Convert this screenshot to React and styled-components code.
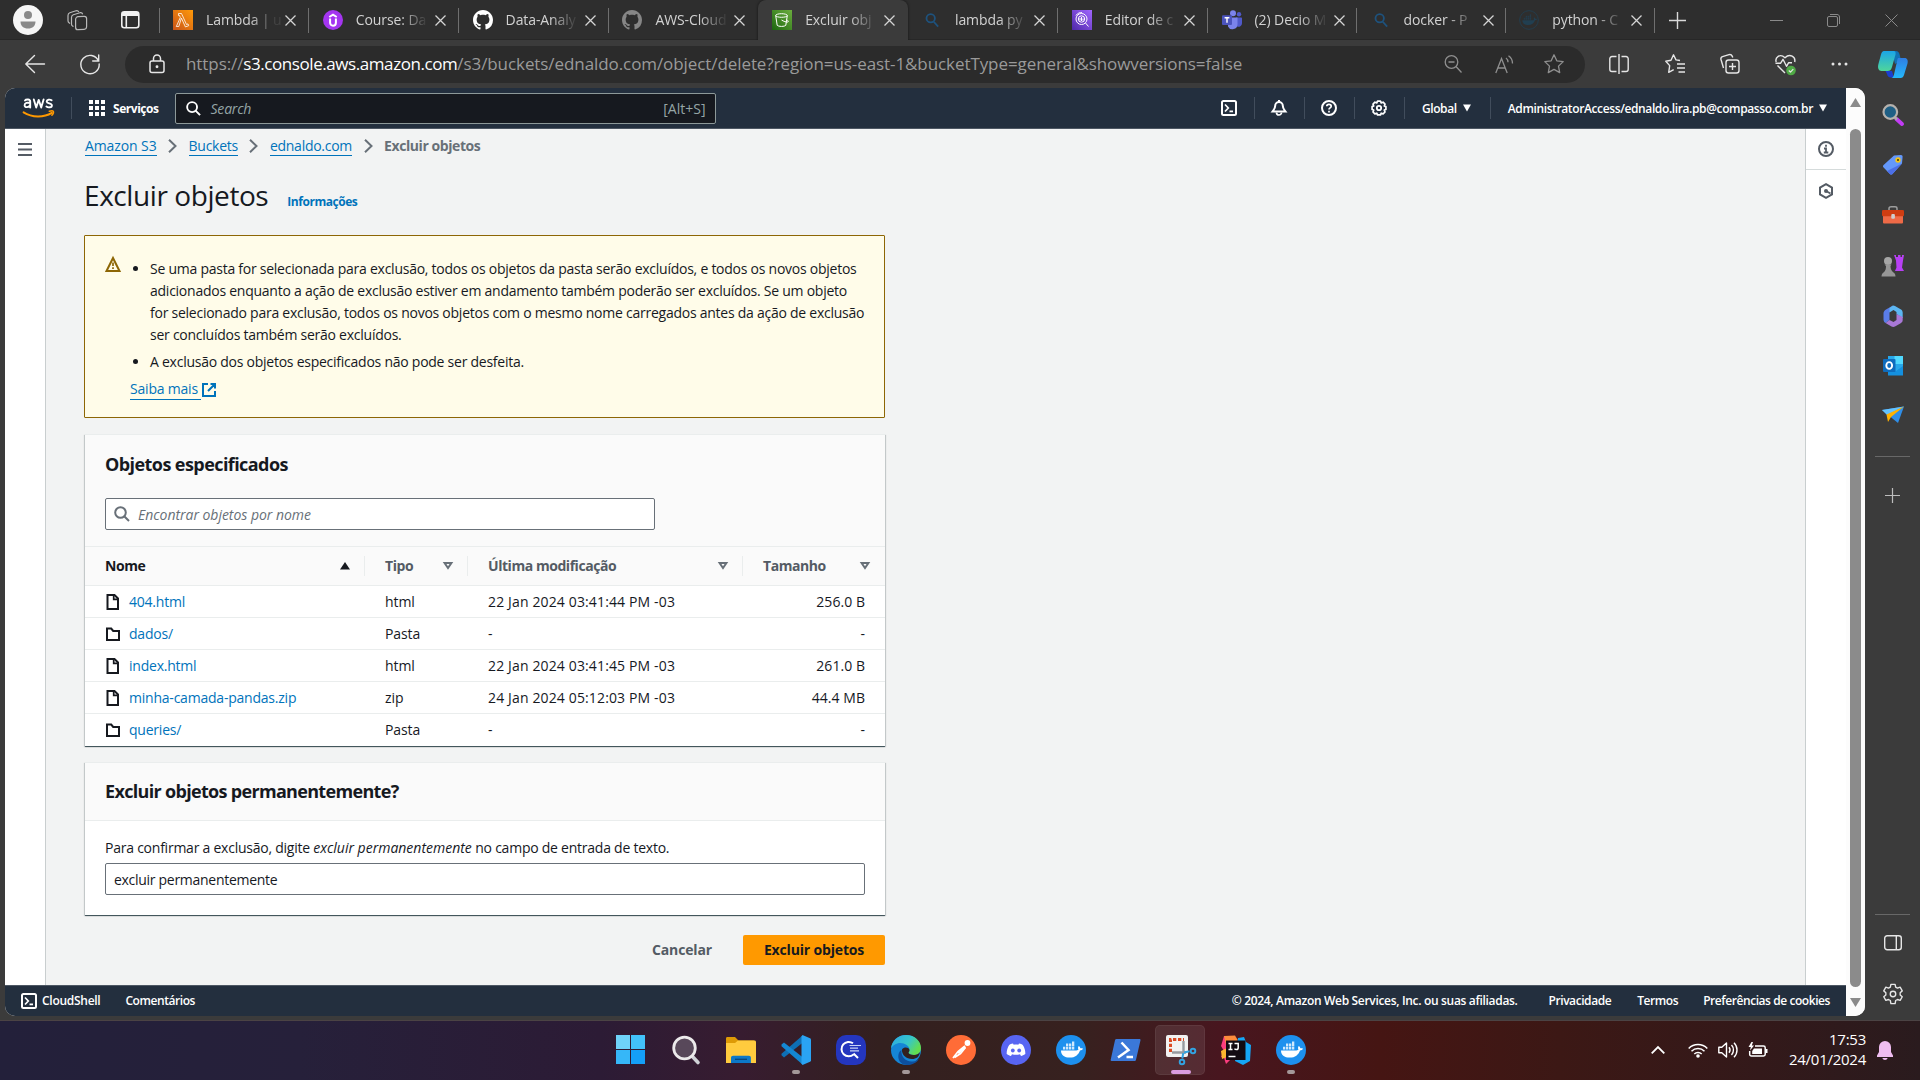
import React from 'react';
import styled, { createGlobalStyle, css } from 'styled-components';

const Global = createGlobalStyle`
  * { box-sizing: border-box; }
  html, body { margin: 0; padding: 0; background: #3b3b3b; overflow: hidden; }
  body { font-family: "Open Sans", "Noto Sans", sans-serif; font-size: 14px; color: #16191f; }
  h1, h2, p, ul { margin: 0; padding: 0; }
  svg { display: block; flex: none; overflow: visible; }
`;

/* ---------- shell ---------- */
const Screen = styled.div`
  width: 1920px; height: 1080px; display: flex; flex-direction: column; background: #3b3b3b; overflow: hidden;
`;
const Icon = styled.svg.attrs(p => ({ viewBox: p.viewBox || '0 0 16 16', fill: 'none' }))`
  width: ${p => p.$w || 16}px;
  height: ${p => p.$h || p.$w || 16}px;
  stroke: ${p => p.$stroke || 'none'};
  stroke-width: ${p => p.$sw || 2};
  stroke-linejoin: ${p => p.$join || 'miter'};
  stroke-linecap: ${p => p.$cap || 'butt'};
`;

/* ---------- browser tabs ---------- */
const TabStrip = styled.div`
  display: flex; align-items: center; height: 40px; background: #2e2e2e; box-shadow: inset 0 -1px 0 #272727;
`;
const Lead = styled.div`
  display: flex; align-items: center; width: 159px; height: 40px; padding-left: 13px; flex: none;
`;
const Avatar = styled.div`
  width: 30px; height: 30px; border-radius: 50%; background: #f6f6f6; display: flex; justify-content: center; align-items: center;
`;
const LeadIcon = styled.div`
  margin-left: ${p => p.$ml}px;
`;
const Tab = styled.div`
  flex: none; width: ${p => p.$w}px; height: 40px; display: flex; align-items: center; padding-left: 14px; position: relative;
  ${p => p.$active && css`
    background: #3b3b3b; border-radius: 8px 8px 0 0; box-shadow: 0 0 3px rgba(0,0,0,.6); clip-path: inset(0 -4px 0 -4px);
  `}
`;
const TabDivider = styled.span`
  position: absolute; left: -0.5px; top: 8px; width: 1px; height: 25px; background: #6f6f6f;
`;
const Favicon = styled.div`
  width: 20px; height: 20px; display: flex; align-items: center; justify-content: center; flex: none;
`;
const TabTitle = styled.div`
  width: 80px; margin: 0 -1px 0 13px; font-size: 14px; line-height: 20px; white-space: nowrap; color: #d2d2d2; letter-spacing: -0.1px;
  -webkit-mask-image: linear-gradient(90deg, #000 55%, rgba(0,0,0,.12) 86%);
  mask-image: linear-gradient(90deg, #000 55%, rgba(0,0,0,.12) 86%);
`;
const NewTab = styled.div`
  width: 46px; height: 40px; display: flex; align-items: center; justify-content: center; position: relative;
`;
const WindowControls = styled.div`
  display: flex; margin-left: auto;
`;
const WinBtn = styled.div`
  width: 57.5px; height: 40px; display: flex; align-items: center; justify-content: center;
`;

/* ---------- address bar ---------- */
const Toolbar = styled.div`
  display: flex; align-items: center; height: 48px; background: #3b3b3b;
`;
const NavIcon = styled.div`
  width: ${p => p.$w || 55}px; height: 37px; display: flex; align-items: center; justify-content: center; flex: none;
`;
const UrlPill = styled.div`
  display: flex; align-items: center; width: 1460px; height: 37px; border-radius: 19px; background: #2b2b2b; padding-left: 24px; margin-left: 15px; flex: none;
`;
const Url = styled.div`
  margin-left: 21px; font-size: 17px; line-height: 24px; color: #9a9a9a; white-space: nowrap; letter-spacing: -0.08px; flex: 1;
`;
const Host = styled.span`
  color: #fff; letter-spacing: -0.43px;
`;

/* ---------- browser body ---------- */
const BrowserBody = styled.div`
  display: flex; height: 933px; padding-left: 5px; background: #3b3b3b; border-bottom: 1px solid #4b4344;
`;
const PageFrame = styled.div`
  display: flex; width: 1860px; height: 928px; border-radius: 10px; overflow: hidden; background: #fff;
`;
const Page = styled.div`
  width: 1841px; display: flex; flex-direction: column;
`;
const Scrollbar = styled.div`
  width: 19px; background: #fcfcfc; display: flex; flex-direction: column; align-items: center; padding: 10px 0 9px;
`;
const Thumb = styled.div`
  width: 11px; height: 858px; border-radius: 6px; background: #8b8b8b; margin: 22px 0 11px;
`;
const EdgeSidebar = styled.div`
  width: 55px; display: flex; flex-direction: column; align-items: center; padding: 2px 0 4px;
`;
const SideSlot = styled.div`
  width: 54px; height: ${p => p.$h || 50.2}px; display: flex; align-items: center; justify-content: center; flex: none;
`;
const SideLine = styled.div`
  width: 35px; height: 1px; background: #686868; margin-top: ${p => p.$mt};
`;

/* ---------- AWS header ---------- */
const AwsHeader = styled.div`
  display: flex; align-items: center; height: 41px; background: #232f3e; border-bottom: 1px solid #4d5763; color: #fff; flex: none;
`;
const LogoCell = styled.div`
  width: 67px; height: 22px; padding-left: 18px; border-right: 1px solid #414d5c;
`;
const Services = styled.div`
  display: flex; align-items: center; gap: 8px; width: 103px; padding-left: 17px; font-size: 12px; font-weight: 700; letter-spacing: -0.46px;
`;
const GlobalSearch = styled.div`
  display: flex; align-items: center; width: 541px; height: 31px; border: 1px solid #8d9999; border-radius: 2px; background: #16191f;
  padding: 0 9px 0 10px; color: #95a5a6; font-size: 14px; margin-left: -0.5px;
`;
const SearchHint = styled.span`
  flex: 1; margin-left: 10px; font-style: italic; letter-spacing: -0.2px;
`;
const HeaderRight = styled.div`
  display: flex; align-items: center; margin-left: auto; height: 22px;
`;
const HeaderIcon = styled.div`
  width: 50px; height: 22px; display: flex; align-items: center; justify-content: center; border-right: 1px solid #414d5c;
`;
const HeaderMenu = styled.div`
  display: flex; align-items: center; gap: 6px; height: 22px; padding: 0 19px 0 17px; font-size: 12px; font-weight: 600; letter-spacing: -0.38px; white-space: nowrap;
  ${p => p.$divided && css`border-right: 1px solid #414d5c;`}
`;

/* ---------- AWS content ---------- */
const Work = styled.div`
  display: flex; flex: 1; min-height: 0;
`;
const LeftRail = styled.div`
  width: 41px; background: #fff; border-right: 1px solid #c9cecf; padding: 14px 0 0 13px;
`;
const RightRail = styled.div`
  width: 41px; background: #fff; border-left: 1px solid #c9cecf;
`;
const RailSlot = styled.div`
  height: 41px; display: flex; align-items: center; justify-content: center;
  ${p => p.$line && css`border-bottom: 1px solid #d5dbdb;`}
`;
const Content = styled.div`
  flex: 1; background: #f2f3f3; padding-left: 38px;
`;
const Column = styled.div`
  width: 802px; display: flex; flex-direction: column; padding-top: 6px;
`;
const Breadcrumbs = styled.div`
  display: flex; align-items: center; height: 22px; color: #687078; padding-left: 1px;
`;
const Link = styled.a`
  color: #0073bb; line-height: 18px; height: 20px; white-space: nowrap;
  letter-spacing: ${p => p.$ls ?? -0.15}px;
  ${p => p.$line && css`border-bottom: 1px solid #0073bb;`}
`;
const Crumb = styled(Link)`
  height: 19px; letter-spacing: ${p => (p.$first ? -0.1 : -0.27)}px;
`;
const Here = styled.span`
  font-weight: 700; letter-spacing: -0.42px; line-height: 20px;
`;
const ChevronBox = styled.span`
  width: 32px; display: flex; justify-content: center;
`;
const TitleRow = styled.div`
  display: flex; align-items: baseline; gap: 19px; margin-top: 20px; height: 36px; padding-left: 0;
`;
const Title = styled.h1`
  font-size: 28px; line-height: 36px; font-weight: 400; letter-spacing: -0.42px;
`;
const Info = styled.a`
  font-size: 12px; font-weight: 700; color: #0073bb; letter-spacing: -0.46px;
`;
const Alert = styled.div`
  display: flex; width: 801px; height: 183px; margin-top: 22px; margin-left: 0; border: 1px solid #8d6605; border-radius: 1px; background: #fffce9; padding: 20px 20px 0;
`;
const AlertBody = styled.div`
  margin-left: 9px; padding-top: 2px;
`;
const AlertList = styled.ul`
  list-style: disc; padding-left: 20px;
`;
const AlertItem = styled.li`
  line-height: 22px; letter-spacing: -0.25px; white-space: nowrap; margin-bottom: 5px;
`;
const LearnMore = styled.div`
  display: flex; align-items: center; height: 23px;
`;
const LearnLink = styled(Link)`
  line-height: 19px; height: 21px;
`;
const Card = styled.section`
  width: 800px; margin: 16px 0 0 1px; background: #fff; border-top: 1px solid #eaeded;
  box-shadow: 0 1px 1px 0 rgba(0,28,36,.3), 1px 1px 1px 0 rgba(0,28,36,.15), -1px 1px 1px 0 rgba(0,28,36,.15), 0 1px 0 #879196;
`;
const CardHead = styled.div`
  background: #fafafa; border-bottom: 1px solid #eaeded; height: ${p => p.$h}px; padding: ${p => p.$pt}px 20px 0;
`;
const CardTitle = styled.h2`
  font-size: 18px; line-height: 24px; font-weight: 700; letter-spacing: ${p => p.$ls}px; white-space: nowrap;
`;
const Field = styled.div`
  display: flex; align-items: center; width: ${p => p.$w}px; height: 32px; margin-top: ${p => p.$mt}px; padding: 0 8px; background: #fff;
  border: 1px solid #687078; border-radius: 2px; letter-spacing: -0.29px;
`;
const Placeholder = styled.span`
  margin-left: 8px; color: #687078; font-style: italic; letter-spacing: -0.03px;
`;
const cols = '279px 103px 275px 143px';
const HeadRow = styled.div`
  display: grid; grid-template-columns: ${cols}; height: 39px; align-items: center; background: #fafafa; border-bottom: 1px solid #eaeded;
`;
const HeadCell = styled.div`
  display: flex; align-items: center; justify-content: space-between; height: 20px; padding: 0 14px 0 20px; font-weight: 700; color: ${p => (p.$on ? '#16191f' : '#545b64')};
  line-height: 18px; letter-spacing: ${p => p.$ls ?? -0.45}px;
  & + & { border-left: 1px solid #eaeded; }
  &:last-child { padding-right: 15px; }
`;
const Row = styled.div`
  display: grid; grid-template-columns: ${cols}; height: 32px; align-items: center; border-bottom: 1px solid #eaeded;
  &:last-child { border-bottom: 0; }
`;
const Cell = styled.div`
  display: flex; align-items: center; padding: 0 20px; line-height: 20px; white-space: nowrap;
  letter-spacing: ${p => p.$ls ?? -0.1}px;
  & + & { padding-left: 21px; }
  ${p => p.$end && css`justify-content: flex-end;`}
`;
const NameLink = styled(Link)`
  margin-left: 8px; line-height: 20px; letter-spacing: -0.22px;
`;
const CardBody = styled.div`
  padding: 16px 20px 20px;
`;
const Label = styled.p`
  line-height: 22px; letter-spacing: -0.24px;
  em { letter-spacing: 0; }
`;
const Actions = styled.div`
  display: flex; align-items: center; justify-content: flex-end; margin-top: 20px; height: 30px; width: 801px;
`;
const Button = styled.button`
  height: 30px; padding: 0; width: ${p => p.$w}px; border: 0; border-radius: 2px; font: 700 14px/30px "Open Sans", sans-serif; letter-spacing: -0.16px;
  background: ${p => (p.$primary ? '#ff9900' : 'transparent')}; color: ${p => (p.$primary ? '#16191f' : '#545b64')};
`;

/* ---------- AWS footer ---------- */
const AwsFooter = styled.div`
  display: flex; align-items: center; height: 31px; background: #232f3e; border-top: 1px solid #4d5763; color: #fff; font-size: 12px; font-weight: 600; padding: 0 16px; flex: none; white-space: nowrap;
`;
const FootText = styled.span`
  margin-left: ${p => p.$ml}; letter-spacing: ${p => p.$ls ?? -0.43}px; line-height: 16px; margin-bottom: 1px;
`;

/* ---------- taskbar ---------- */
const Taskbar = styled.div`
  display: flex; align-items: center; height: 59px; padding-left: 603px;
  background: linear-gradient(90deg, #23203a 0, #26203a 300px, #2c1b35 600px, #371c30 740px, #33201f 880px, #37211f 1080px, #48161f 1220px, #451513 1380px, #3c1815 1560px, #33191a 1760px, #2a1b1e 1920px);
`;
const TaskItem = styled.div`
  width: 55px; height: 50px; display: flex; flex-direction: column; align-items: center; padding-top: 10px; margin-bottom: 1px; position: relative;
`;
const Active = styled.div`
  position: absolute; left: 2px; top: 0; width: 50px; height: 50px; border-radius: 5px; background: rgba(255,255,255,.09); border: 1px solid rgba(255,255,255,.06);
`;
const Indicator = styled.span`
  position: absolute; bottom: 1px; width: ${p => (p.$wide ? 20 : 8)}px; height: 4px; border-radius: 2px; background: ${p => (p.$wide ? '#da9ce0' : '#a49899')};
`;
const Tray = styled.div`
  display: flex; align-items: center; margin-left: auto; height: 58px; margin-bottom: 1px;
`;
const TrayIcon = styled.div`
  width: ${p => p.$w || 30}px; display: flex; justify-content: center;
`;
const Clock = styled.div`
  width: 93px; text-align: right; color: #fff; font-size: 15px; line-height: 20px; letter-spacing: -0.26px; padding-bottom: 3px;
`;

/* ---------- drawings ---------- */
const Close = () => (
  <Icon $w={11} viewBox="0 0 11 11" $stroke="#d5d5d5" $sw={1.3}><path d="M.5.5l10 10M10.5.5l-10 10" /></Icon>
);
const Caret = () => <Icon $w={8} $h={8} viewBox="0 0 8 8"><path d="M0 .5h8L4 7.5z" fill="#fff" /></Icon>;
const Loupe = ({ c = '#fff', s = 16, sw = 2 }) => (
  <Icon $w={s} $stroke={c} $sw={sw}><circle cx="6.5" cy="6.5" r="5.3" /><path d="M10.2 10.2l4.800 4.800" /></Icon>
);
const SortDown = () => <Icon $w={10} $h={8} viewBox="0 0 10 8" $stroke="#687078" $sw={2}><path d="M1.6 1h6.8L5 6z" /></Icon>;
const SortUp = () => <Icon $w={10} $h={8} viewBox="0 0 10 8"><path d="M5 0l5 7.5H0z" fill="#16191f" /></Icon>;
const FileIcon = () => (
  <Icon $stroke="#16191f"><path d="M2.5 1h7L13 4.5V15H2.5z" /><path d="M8.7 1v4.3H13" strokeWidth="1.7" /></Icon>
);
const FolderIcon = () => <Icon $stroke="#16191f"><path d="M2 14V2.6h4.2l2 2.4H14v9z" /></Icon>;
const Shell = () => (
  <Icon $stroke="#fff"><rect x="1" y="1" width="14" height="14" rx="1.5" /><path d="M4 4.5L7.3 8 4 11.500M8.500 11.300h3.500" strokeWidth="1.7" /></Icon>
);
const GitHubMark = ({ c }) => (
  <Icon $w={20}><path fill={c} d="M8 0C3.580 0 0 3.580 0 8c0 3.540 2.290 6.530 5.470 7.590.4.070.550-.170.550-.380 0-.190-.010-.820-.010-1.490-2.010.370-2.530-.490-2.690-.940-.090-.230-.480-.940-.820-1.130-.280-.150-.680-.520-.010-.530.630-.010 1.080.580 1.230.820.720 1.210 1.870.870 2.330.660.070-.520.280-.870.510-1.070-1.780-.200-3.640-.890-3.640-3.950 0-.870.310-1.590.820-2.150-.080-.200-.360-1.020.080-2.120 0 0 .670-.210 2.200.820.640-.180 1.320-.270 2-.270s1.360.090 2 .270c1.530-1.040 2.200-.820 2.200-.820.440 1.100.160 1.920.080 2.120.510.560.820 1.270.820 2.150 0 3.070-1.870 3.750-3.650 3.950.290.250.540.730.540 1.480 0 1.070-.010 1.930-.010 2.200 0 .210.150.460.550.380A8.010 8.010 0 0016 8c0-4.420-3.580-8-8-8z" /></Icon>
);
const Whale = ({ c = '#fff' }) => (
  <g fill={c}>
    <path d="M5 15.500h15.500c.9 0 1.700-.4 2-.9-.8-1.200-.5-2.800.3-3.700.9.600 1.500 1.500 1.500 2.400 1-.2 2-.1 2.700.4-.6 1.100-1.700 1.700-3 1.700-1.500 4.200-4.800 7.200-10.200 7.200-5.500 0-8.800-2.500-8.800-7.100z" />
    <path d="M7 11.800h2.300v2.700H7zM10 11.800h2.300v2.700H10zM13 11.800h2.300v2.700H13zM16 11.800h2.300v2.700H16zM10 8.600h2.300v2.700H10zM13 8.600h2.300v2.700H13zM16 6.500h2.300v4.800H16z" opacity=".8" />
  </g>
);
const Docker = () => (
  <Icon $w={30} viewBox="0 0 30 30"><circle cx="15" cy="15" r="15" fill="#1d90ee" /><Whale /></Icon>
);
const LambdaIcon = () => (
  <Icon $w={20} viewBox="0 0 20 20">
    <defs><linearGradient id="lam" x1="0" y1="1" x2="1" y2="0"><stop offset="0" stopColor="#c85318" /><stop offset="1" stopColor="#ff9a09" /></linearGradient></defs>
    <rect width="20" height="20" fill="url(#lam)" />
    <path d="M5.500 3.500h3l5 11 1.500-.6.7 1.800-3.300 1.200-4-8.800L5.800 16.500H3.300L7.300 7.600 6.600 5.500H5.500z" stroke="#fff" strokeWidth=".8" />
  </Icon>
);
const UdemyIcon = () => (
  <Icon $w={20} viewBox="0 0 20 20"><circle cx="10" cy="10" r="10" fill="#a435f0" /><path d="M6.300 7L10 4.700 13.700 7M7.100 8.500v4.300a2.900 2.900 0 005.800 0V8.500" stroke="#fff" strokeWidth="2" /></Icon>
);
const BucketIcon = () => (
  <Icon $w={20} viewBox="0 0 20 20">
    <defs><linearGradient id="s3" x1="0" y1="1" x2="1" y2="0"><stop offset="0" stopColor="#1b660f" /><stop offset="1" stopColor="#6cae3e" /></linearGradient></defs>
    <rect width="20" height="20" fill="url(#s3)" />
    <g stroke="#fff" strokeWidth="1"><ellipse cx="9.500" cy="5.500" rx="5.800" ry="1.800" /><path d="M3.700 5.500l1.500 9.800c1 1.500 7.600 1.500 8.600 0l1.500-9.800M9.500 10c2 1.300 5 2.400 6.500 2 1-.4-.2-1.600-1.400-2.400" /></g>
  </Icon>
);
const AthenaIcon = () => (
  <Icon $w={20} viewBox="0 0 20 20">
    <defs><linearGradient id="ath" x1="0" y1="1" x2="1" y2="0"><stop offset="0" stopColor="#4d27a8" /><stop offset="1" stopColor="#a166ff" /></linearGradient></defs>
    <rect width="20" height="20" fill="url(#ath)" />
    <g stroke="#fff" strokeWidth="1"><circle cx="9.500" cy="9" r="5.500" /><circle cx="9.500" cy="9" r="3.200" /><path d="M13.500 13l3 3.500M8 8v2.500M9.500 7v4M11 8.500v2M4 5.500C5.500 3 8 2.500 10 2.600" /></g>
  </Icon>
);
const TeamsIcon = () => (
  <Icon $w={20} viewBox="0 0 20 20">
    <circle cx="11" cy="3.300" r="3" fill="#7b83eb" /><circle cx="17" cy="4.300" r="2.200" fill="#5059c9" />
    <path d="M14 7.500h5.300c.4 0 .7.300.7.700v5a3.500 3.500 0 01-5 3.200z" fill="#5059c9" /><path d="M6 7.500h9.500v6.700a5 5 0 01-9.500 2.200z" fill="#7b83eb" />
    <rect y="5.200" width="10" height="9.800" rx="1" fill="#4b53bc" /><path d="M2.600 7.700h4.800M5 7.700v5" stroke="#fff" strokeWidth="1.400" />
  </Icon>
);
const DimLoupe = () => (
  <Icon $w={14} $stroke="#1e527d" $sw={2.1}><circle cx="6.500" cy="6" r="4.800" /><path d="M10 10l5 5.500" /></Icon>
);
const DimDocker = () => (
  <Icon $w={20} viewBox="0 0 30 30"><circle cx="15" cy="15" r="14" stroke="#213f51" strokeWidth="1.300" /><Whale c="#213f51" /></Icon>
);
const Gear = ({ s, c, sw }) => (
  <Icon $w={s} viewBox="0 0 24 24" $stroke={c} $sw={sw} $join="round">
    <path d="M9.700 1.500h4.600l.6 3 2 1.100 2.900-1 2.300 4-2.300 2v2.400l2.300 2-2.300 4-2.900-1-2 1.100-.6 3.400H9.700l-.6-3.400-2-1.100-2.900 1-2.300-4 2.300-2v-2.400l-2.300-2 2.300-4 2.900 1 2-1.100z" /><circle cx="12" cy="12" r="3" />
  </Icon>
);
const AwsLogo = () => (
  <Icon $w={31} $h={21} viewBox="0 0 31 21" $cap="round">
    <g stroke="#fff" strokeWidth="1.900" strokeLinejoin="round">
      <path d="M2 3.500C3 2 7.200 1.900 7.200 4.500V10.500M7.200 6C4.500 5.400 1.600 5.700 1.600 8.200c0 2.900 4.300 2.400 5.600-.2" />
      <path d="M10.800 2.500l2.400 8 2.500-7.600 2.500 7.600 2.400-8" />
      <path d="M28.600 3.200c-1.700-1-4.900-.7-4.900 1.200 0 2.400 5.200 1.500 5.200 4 0 2.200-3.700 2.500-5.500 1.200" />
    </g>
    <path d="M.6 15.400c8.500 5.300 20 5.400 28.200.5" stroke="#ff9900" strokeWidth="2" /><path d="M26.300 14.300c1.500-.5 3.600-.6 4 0 .4.700-.3 2.700-1.400 3.900" stroke="#ff9900" strokeWidth="1.500" />
  </Icon>
);

/* ---------- data ---------- */
const tabs = [
  { t: 'Lambda | u', i: <LambdaIcon /> },
  { t: 'Course: Da', i: <UdemyIcon /> },
  { t: 'Data-Analy', i: <GitHubMark c="#fff" /> },
  { t: 'AWS-Cloud', i: <GitHubMark c="#868686" /> },
  { t: 'Excluir obj', i: <BucketIcon />, active: true },
  { t: 'lambda py', i: <DimLoupe />, plain: true },
  { t: 'Editor de c', i: <AthenaIcon /> },
  { t: '(2) Decio M', i: <TeamsIcon />, w: 149 },
  { t: 'docker - P', i: <DimLoupe />, w: 148.7 },
  { t: 'python - C', i: <DimDocker />, w: 149 },
];
const rows = [
  ['404.html', 'html', '22 Jan 2024 03:41:44 PM -03', '256.0 B'],
  ['dados/', 'Pasta', '-', '-'],
  ['index.html', 'html', '22 Jan 2024 03:41:45 PM -03', '261.0 B'],
  ['minha-camada-pandas.zip', 'zip', '24 Jan 2024 05:12:03 PM -03', '44.4 MB'],
  ['queries/', 'Pasta', '-', '-'],
];

const sideIcons = [
  <Icon key="search" $w={22} viewBox="0 0 22 22"><path d="M14.500 15l5.500 5" stroke="#c23cf5" strokeWidth="4" strokeLinecap="round" /><path d="M12 12.500l3 3" stroke="#aaa" strokeWidth="2.500" /><circle cx="8.300" cy="8" r="6.800" fill="#1f5f85" stroke="#b5b1ad" strokeWidth="2.200" /></Icon>,
  <Icon key="tag" $w={22} viewBox="0 0 22 22"><path d="M12 1.500L19 1c1 0 1.700.8 1.600 1.800L20 9.500 10.500 20c-.8.800-1.800.8-2.600 0L1.600 13.600c-.8-.8-.8-1.700 0-2.500z" fill="#6498fa" /><path d="M20 9.500L10.500 20c-.8.800-1.800.8-2.600 0L5 17z" fill="#4c6fe8" /><circle cx="16" cy="6" r="1.900" stroke="#f2c31b" strokeWidth="1.700" fill="#493d00" /></Icon>,
  <Icon key="tools" $w={22} viewBox="0 0 22 22"><path d="M7 6V4.500C7 3 8 2.800 9 2.800h4c1.200 0 2 .4 2 1.700V6" stroke="#9d9d9d" strokeWidth="1.500" /><rect x="1" y="11" width="20" height="8.500" rx="1" fill="#ee6a47" /><rect x="0" y="6" width="22" height="6.300" rx="1.300" fill="#cf3d12" /><rect x="9.300" y="10" width="3.600" height="4.800" rx="1" fill="#cfcfcf" /></Icon>,
  <Icon key="games" $w={23} viewBox="0 0 23 23"><path d="M13 1h2v2h2V1h2.500v2h1.500V1h2l-1 5.500-1 7 2 3.500h-9l1.500-3.500-.5-7z" fill="#b840f5" /><circle cx="7" cy="7" r="4" fill="#a6a6a6" /><path d="M3.500 10.500h7L9.500 12c0 3 1 5 3 6.500 1.500 1 2 2.500 2 4h-14c0-1.500.6-3 2-4 2-1.500 2.500-3.500 2.500-6.500z" fill="#969696" /></Icon>,
  <Icon key="m365" $w={22} viewBox="0 0 22 22"><path d="M11 .5L4 4.500C2.500 5.400 1.500 7 1.500 8.500v6c0 1.500 1 3 2 3.500l4-3V7.500z" fill="#5a7de8" /><path d="M11 .5c1 0 1.500.2 2 .5l6 3.500c1 .6 1.700 2 1.700 3v5.500L14.500 9V7l-3-2L7.500 7.500V3z" fill="#5cb6f2" /><path d="M20.700 12v3c0 1.500-.7 2.500-2 3.200L13 21.500c-1 .6-2.500.6-3.500 0L3.500 18l4-3 4 2 3-2V9z" fill="#a878d6" /></Icon>,
  <Icon key="outlook" $w={22} viewBox="0 0 22 22"><path d="M6 1h15v19H6z" fill="#28a8ea" /><path d="M12.500 1H21v8h-8.500z" fill="#50d9ff" /><path d="M6 11l8 5 7-5v9.500H6z" fill="#1490df" /><rect x="1" y="4" width="12.500" height="13" rx="1" fill="#0f6cbd" /><ellipse cx="7.200" cy="10.500" rx="2.900" ry="3.400" stroke="#fff" strokeWidth="1.900" /></Icon>,
  <Icon key="send" $w={22} viewBox="0 0 22 22"><path d="M0 5l22-3.500L16 18z" fill="#2f8ee8" /><path d="M0 5l22-3.500L5 10z" fill="#63c2ff" /><path d="M4.500 9.500L22 1.500 9 12l-3 5z" fill="#ffb200" /></Icon>,
];

const taskIcons = [
  { i: <Icon $w={29} viewBox="0 0 29 29"><path d="M0 0h14v14H0z" fill="#6fd3f9" /><path d="M15 0h14v14H15z" fill="#42c2fb" /><path d="M0 15h14v14H0z" fill="#36b7f8" /><path d="M15 15h14v14H15z" fill="#149ff8" /></Icon> },
  { i: <Icon $w={30} viewBox="0 0 30 30"><path d="M20.500 20.500l6.500 7" stroke="#cfd2d6" strokeWidth="3.600" strokeLinecap="round" /><circle cx="13.500" cy="13" r="10.800" fill="#58485a" stroke="#eceaeb" strokeWidth="2.800" /></Icon> },
  { i: <Icon $w={30} viewBox="0 0 30 30"><path d="M0 3.500c0-1 .5-1.500 1.500-1.500H9l3.500 3.500H28V15H0z" fill="#dd9a06" /><path d="M0 8h9l3-2.500h16.500c.9 0 1.500.6 1.500 1.500v21H0z" fill="#ffcb3e" /><path d="M5 28v-5c0-1.500.7-2.200 2.200-2.200h15.500c1.500 0 2.200.7 2.200 2.200v5z" fill="#0c78c8" /><path d="M9 24.300h12" stroke="#08457a" strokeWidth="1.300" /></Icon> },
  { i: <Icon $w={30} viewBox="0 0 30 30"><path d="M22 7.500L3 22.500l-2.500-2.200v-1.600L21.500.5z" fill="#0e6fb5" /><path d="M22 22.500L3 7.500.5 9.500v1.700L21.500 29.500z" fill="#1487d2" /><path d="M21.500 0L29 3.200c.7.300 1 .8 1 1.500v20.600c0 .7-.3 1.200-1 1.500L21.500 30l-1-1.500v-27z" fill="#2aa3f3" /></Icon>, on: true },
  { i: <Icon $w={30} viewBox="0 0 30 30"><rect width="30" height="30" rx="10" fill="#2436bf" /><path d="M17.500 19.500A7.200 7.200 0 1117 8.300M17.500 18.500l4.500 4.500" stroke="#fff" strokeWidth="2" /><path d="M13.500 10.500H25M14 13.200h8M14 15.800h9" stroke="#c9d3f6" strokeWidth="1.200" /></Icon> },
  { i: <Icon $w={30} viewBox="0 0 30 30">
      <defs><linearGradient id="e1" x1="0" y1="0" x2="1" y2=".5"><stop offset="0" stopColor="#2aa6e8" /><stop offset=".6" stopColor="#37c6c9" /><stop offset="1" stopColor="#62dd50" /></linearGradient></defs>
      <circle cx="15" cy="15" r="15" fill="#1585d6" />
      <path d="M0 13.500C.8 5.500 7 0 15 0c9 0 15 6.200 15 13 0 4.500-3.200 7-7 7-3.300 0-5.500-1.200-5.500-2.300 0-.7 1-1 1-3C18.500 11 14 8 9.500 8 5 8 1.500 10.500 0 13.500z" fill="url(#e1)" />
      <path d="M10.500 15c-1 6 4 12 11 11.500 3-.2 5.500-1.500 6.500-2.500C25.500 28 20.500 30 16 30 9 30 6.500 24 7.500 19.500c.4-2 1.500-3.600 3-4.500z" fill="#0d4f9e" />
      <path d="M11 14.500c2-2.700 6.500-2.500 7.500.5 0 1.500-1 2-1 2.700 0 1.100 2.200 2.300 5.500 2.300 2.500 0 4.800-1 6-3-1 5-3.500 7-8 7-5.500 0-10.500-4-10-9.500z" fill="#33201f" /></Icon>, on: true },
  { i: <Icon $w={30} viewBox="0 0 30 30"><circle cx="15" cy="15" r="15" fill="#ff6c37" /><path d="M7 23l5-6.500 7-5.500M8.500 22.500l6-4 5-6" stroke="#fff" strokeWidth="1.700" /><path d="M11 18l7.500-7 1.500 1.800-7 6z" fill="#fff" /><circle cx="21.500" cy="8" r="2.900" fill="#fff" /></Icon> },
  { i: <Icon $w={30} viewBox="0 0 30 30"><circle cx="15" cy="15" r="15" fill="#5865f2" /><path d="M12 8.500c-1.700.3-3 .8-3.800 1.400C6.200 13 5.500 16.500 5.700 19c1.600 1.200 3 1.800 4.300 2l1-1.700c2.700.7 5.300.7 8 0l1 1.700c1.300-.2 2.700-.8 4.300-2 .2-2.500-.5-6-2.500-9.100-.8-.6-2.100-1.100-3.800-1.400l-.7 1.200c-1.500-.2-3.100-.2-4.600 0z" fill="#fff" /><ellipse cx="11.800" cy="15.500" rx="1.900" ry="2.100" fill="#5865f2" /><ellipse cx="18.200" cy="15.500" rx="1.900" ry="2.100" fill="#5865f2" /></Icon> },
  { i: <Docker /> },
  { i: <Icon $w={30} viewBox="0 0 30 30"><path d="M5.500 4h23c.7 0 1.100.5 1 1.200L25 24.800c-.2.800-.7 1.200-1.500 1.200h-23c-.7 0-1-.5-.8-1.200L4 5.200C4.200 4.400 4.700 4 5.500 4z" fill="#3b78d8" /><path d="M10.500 7.500l7 7.500-10.500 7.500M15.500 22h6.500" stroke="#fff" strokeWidth="2.500" /></Icon> },
  { i: <Icon $w={30} viewBox="0 0 30 30"><rect width="22" height="22" rx="2" fill="#f1f1f1" /><path d="M4.500 17V4.500H18" stroke="#d8390e" strokeWidth="3" strokeDasharray="3.300 1.700" /><path d="M17.500 6v13M6 17.500h14" stroke="#8d9196" strokeWidth="2.400" /><path d="M17.300 18l-1 5.500M18 17.500l5.500-1.200" stroke="#1e9be0" strokeWidth="2" /><circle cx="16" cy="27" r="2.300" stroke="#1e9be0" strokeWidth="1.900" /><circle cx="27" cy="16" r="2.300" stroke="#1e9be0" strokeWidth="1.900" /></Icon>, sel: true },
  { i: <Icon $w={30} viewBox="0 0 30 30">
      <path d="M3 1l9 1 3 10-5 12-5 5-2-6-3-1 3-6-3-5z" fill="#fb3d7f" /><path d="M3 1l11-.5 3 5L5 10z" fill="#fd8c3c" /><path d="M0 16l6-3v9l-5 2z" fill="#fdb62f" /><path d="M17 3l6-1 2 5 5 3-1 16-7 4-8-4z" fill="#15a6f5" />
      <rect x="5" y="5.500" width="19.500" height="19.500" fill="#120b12" /><path d="M7.500 8.500h4M9.500 8.500v6M7.500 14.500h4M13.500 8.500h3.700v4.300c0 1.300-.7 1.800-1.700 1.800-.9 0-1.600-.3-2-.9" stroke="#fff" strokeWidth="1.500" /><path d="M7.500 21.500h7" stroke="#fff" strokeWidth="1.500" /></Icon> },
  { i: <Docker />, on: true },
];

export default function App() {
  return (
    <Screen>
      <Global />
      <TabStrip>
        <Lead>
          <Avatar>
            <Icon $w={16} $h={18} viewBox="0 0 16 18"><circle cx="8" cy="4" r="4" fill="#8a8a8a" /><path d="M.5 10.500h15c0 4.500-3 7-7.500 7s-7.500-2.500-7.500-7z" fill="#8a8a8a" /></Icon>
          </Avatar>
          <LeadIcon $ml={24}>
            <Icon $w={21} viewBox="0 0 21 21" $stroke="#b9b9b9" $sw={1.2} $join="round">
              <rect x="8.600" y="6.500" width="11" height="13" rx="2.500" transform="skewY(-4) translate(0 1)" />
              <path d="M6.500 16.500l-1-.6c-1-.6-1-1.300-1-2V7.500c0-1.500.5-2.200 1.800-2.700L13 2.700c1.500-.4 2.300.3 2.700 1.500M3 13.500l-1-.7c-1-.7-1-1-1-2V5.500C1 4 1.500 3.300 2.800 2.800L9 .8c1.500-.4 2.300.2 2.800 1.200" />
            </Icon>
          </LeadIcon>
          <LeadIcon $ml={33}>
            <Icon $w={19} $h={18} viewBox="0 0 19 18" $stroke="#f1f1f1" $sw={1.6}>
              <rect x=".8" y=".8" width="17" height="16" rx="2.500" /><path d="M1 3h17" strokeWidth="4" /><path d="M5.300 5v12" />
            </Icon>
          </LeadIcon>
        </Lead>
        {tabs.map(t => (
          <Tab key={t.t} $active={t.active} $w={t.w || 149.8}>
            {!t.active && !t.plain && <TabDivider />}
            <Favicon>{t.i}</Favicon>
            <TabTitle>{t.t}</TabTitle>
            <Close />
          </Tab>
        ))}
        <NewTab><TabDivider /><Icon $w={17} viewBox="0 0 17 17" $stroke="#dadada" $sw={1.4}><path d="M8.500 0v17M0 8.500h17" /></Icon></NewTab>
        <WindowControls>
          <WinBtn><Icon $w={13} viewBox="0 0 13 13" $stroke="#8a8a8a" $sw={1}><path d="M0 6.500h13" /></Icon></WinBtn>
          <WinBtn><Icon $w={13} viewBox="0 0 13 13" $stroke="#8a8a8a" $sw={1}><rect x=".5" y="2.500" width="10" height="10" rx="1.500" /><path d="M3 .5h7c1.500 0 2.500 1 2.500 2.500v7" /></Icon></WinBtn>
          <WinBtn><Icon $w={13} viewBox="0 0 13 13" $stroke="#8a8a8a" $sw={1}><path d="M.5.5l12 12M12.500.5l-12 12" /></Icon></WinBtn>
        </WindowControls>
      </TabStrip>

      <Toolbar>
        <NavIcon $w={70}><Icon $w={20} viewBox="0 0 20 20" $stroke="#e6e6e6" $sw={1.4} $join="round" $cap="round"><path d="M19.500 10H.8M9.500 1.500L.8 10l8.700 8.500" /></Icon></NavIcon>
        <NavIcon $w={40}><Icon $w={20} viewBox="0 0 20 20" $stroke="#e6e6e6" $sw={1.4} $cap="round"><path d="M18.500 7A9.200 9.200 0 1019.200 10M18.700 1v6h-6" /></Icon></NavIcon>
        <UrlPill>
          <Icon $w={16} $h={20} viewBox="0 0 16 20" $stroke="#e6e6e6" $sw={1.5}><rect x="1" y="7" width="14" height="11.500" rx="2" /><path d="M4.500 7V4.500a3.500 3.500 0 017 0V7" /><circle cx="8" cy="12.700" r=".7" fill="#e6e6e6" /></Icon>
          <Url>https://<Host>s3.console.aws.amazon.com</Host>/s3/buckets/ednaldo.com/object/delete?region=us-east-1&amp;bucketType=general&amp;showversions=false</Url>
          <NavIcon $w={66}><Icon $w={18} viewBox="0 0 18 18" $stroke="#8f8f8f" $sw={1.3}><circle cx="7.500" cy="7" r="6.300" /><path d="M4.500 7h6M12 11.500l5.500 6" /></Icon></NavIcon>
          <NavIcon $w={37}><Icon $w={19} viewBox="0 0 19 19" $stroke="#8f8f8f" $sw={1.3}><path d="M.8 18L6.500 3.500 12.200 18M2.800 13h7.400M11 3c1.300 1 2 2.500 2 4.300M13.500.8C16 2.500 17.500 5 17.500 8.500" /></Icon></NavIcon>
          <NavIcon $w={62}><Icon $w={20} viewBox="0 0 20 20" $stroke="#8f8f8f" $sw={1.3} $join="round"><path d="M10 .8l2.800 6 6.400.8-4.700 4.500 1.200 6.500L10 15.400l-5.700 3.200 1.200-6.500L.8 7.600l6.400-.8z" /></Icon></NavIcon>
        </UrlPill>
        <NavIcon $w={67}><Icon $w={20} viewBox="0 0 20 20" $stroke="#e6e6e6" $sw={1.4} $join="round"><path d="M7.500 2.500H3A2.200 2.200 0 00.8 4.700v10.600A2.200 2.200 0 003 17.500h4.500M12.500 2.500H17a2.200 2.200 0 012.200 2.200v10.600a2.200 2.200 0 01-2.200 2.200h-4.500M10 0v20" /></Icon></NavIcon>
        <NavIcon $w={46}><Icon $w={20} viewBox="0 0 20 20" $stroke="#e6e6e6" $sw={1.4} $join="round"><path d="M15 6.500l-4-.6L8.500.8 6 6.300l-5.200.9 3.900 4.400-1 6.700 5-2.700M12 10h8M12 14h8M13.500 18H20" /></Icon></NavIcon>
        <NavIcon $w={63}><Icon $w={20} viewBox="0 0 20 20" $stroke="#e6e6e6" $sw={1.4} $join="round"><rect x="6" y="6" width="13" height="13" rx="2.500" /><path d="M12.500 9v7M9 12.500h7M3.500 14L1 5.500C.6 4 1.300 3 2.500 2.600l6.500-2c1.500-.4 2.500 0 3.200 1.500l.6 1.400" /></Icon></NavIcon>
        <NavIcon $w={48}><Icon $w={21} viewBox="0 0 21 21" $stroke="#e6e6e6" $sw={1.4} $join="round"><path d="M1.200 8C-.3 3.500 5-1 10 3.700 15-1 20.800 3 19.700 8M2.500 11.500L10 19M.5 9.300h5l2.500-4 3.500 7 2-3.500h3.500" /><circle cx="16" cy="16.500" r="4.800" fill="#4fa945" stroke="none" /><path d="M13.800 16.500l1.700 1.700 2.800-3" strokeWidth="1.200" /></Icon></NavIcon>
        <NavIcon $w={61}><Icon $w={17} $h={4} viewBox="0 0 17 4"><g fill="#e6e6e6"><circle cx="2" cy="2" r="1.500" /><circle cx="8.500" cy="2" r="1.500" /><circle cx="15" cy="2" r="1.500" /></g></Icon></NavIcon>
        <NavIcon $w={46}>
          <Icon $w={30} $h={28} viewBox="0 0 30 28">
            <defs>
              <linearGradient id="cp1" x1="0" y1="0" x2="0" y2="1"><stop offset="0" stopColor="#1ba5e8" /><stop offset="1" stopColor="#4fd69b" /></linearGradient>
              <linearGradient id="cp2" x1="0" y1="0" x2="0" y2="1"><stop offset="0" stopColor="#2f7de2" /><stop offset="1" stopColor="#25b8fb" /></linearGradient>
            </defs>
            <path d="M14 1h4c2 0 3 1.500 3.600 3.500L22.500 8H26l-9 6z" fill="#1172b5" /><path d="M6 1h9.500c2 0 2.400 1.500 2 3.500L14 17c-1 3-2 4-4.500 4H3.500C.5 21-.5 18 .3 14.500L3 4.500C3.600 2.200 4.500 1 6 1z" fill="url(#cp1)" />
            <path d="M7.500 21H14l2 6.500h-3c-2.500 0-3.500-1.500-4-3.500z" fill="#1a3fd0" /><path d="M20 8h6.500c3 0 3.700 2.500 3 5.500L26 25c-.7 2-1.500 3-3.500 3h-9c1.500-.5 2-1.500 2.500-3.500L19 11.500c.3-1.500.5-2.500 1-3.500z" fill="url(#cp2)" />
          </Icon>
        </NavIcon>
      </Toolbar>

      <BrowserBody>
        <PageFrame>
          <Page>
            <AwsHeader>
              <LogoCell><AwsLogo /></LogoCell>
              <Services>
                <Icon><path fill="#fff" d="M0 0h4v4H0zM6 0h4v4H6zM12 0h4v4h-4zM0 6h4v4H0zM6 6h4v4H6zM12 6h4v4h-4zM0 12h4v4H0zM6 12h4v4H6zM12 12h4v4h-4z" /></Icon>
                Serviços
              </Services>
              <GlobalSearch><Loupe s={15} /><SearchHint>Search</SearchHint>[Alt+S]</GlobalSearch>
              <HeaderRight>
                <HeaderIcon><Shell /></HeaderIcon>
                <HeaderIcon><Icon $stroke="#fff"><path d="M8 2a3.800 3.800 0 00-3.800 3.800C4.200 8.500 3 9.500 1.500 11.500h13C13 9.500 11.800 8.500 11.800 5.800A3.800 3.800 0 008 2zM8 0v2" /><path d="M5.500 12.500a2.500 2.500 0 005 0" strokeWidth="1.700" /></Icon></HeaderIcon>
                <HeaderIcon><Icon $stroke="#fff"><circle cx="8" cy="8" r="7" /><path d="M5.800 6.300C5.800 3.600 10.200 3.700 10.200 6.200 10.200 8 8 7.700 8 9.500M8 10.800v1.700" strokeWidth="1.700" /></Icon></HeaderIcon>
                <HeaderIcon><Icon $stroke="#fff" $join="round"><path d="M6.500 1.200h3l.7 1.700 1.900-.7 1.900 1.900-.7 1.900 1.600.6v2.900l-1.600.6.7 1.900-1.900 1.900-1.900-.7-.7 1.700h-3l-.7-1.700-1.900.7-1.900-1.900.7-1.900-1.600-.6V6.600L2.700 6 2 4.100l1.900-1.900 1.900.7z" strokeWidth="1.700" /><circle cx="8" cy="8" r="2.200" strokeWidth="1.800" /></Icon></HeaderIcon>
                <HeaderMenu $divided>Global <Caret /></HeaderMenu>
                <HeaderMenu>AdministratorAccess/ednaldo.lira.pb@compasso.com.br <Caret /></HeaderMenu>
              </HeaderRight>
            </AwsHeader>

            <Work>
              <LeftRail><Icon $w={14} $h={13} viewBox="0 0 14 13" $stroke="#545b64"><path d="M0 1h14M0 6.500h14M0 12h14" /></Icon></LeftRail>
              <Content>
                <Column>
                  <Breadcrumbs>
                    {['Amazon S3', 'Buckets', 'ednaldo.com'].map((b, n) => (
                      <React.Fragment key={b}>
                        <Crumb $line $first={n === 0}>{b}</Crumb>
                        <ChevronBox><Icon $w={9} $h={14} viewBox="0 0 9 14" $stroke="#687078"><path d="M1 .8L7.500 7 1 13.200" /></Icon></ChevronBox>
                      </React.Fragment>
                    ))}
                    <Here>Excluir objetos</Here>
                  </Breadcrumbs>
                  <TitleRow><Title>Excluir objetos</Title><Info>Informações</Info></TitleRow>
                  <Alert>
                    <Icon $stroke="#8d6605"><path d="M8 2l6.500 13h-13z" /><path d="M8 6.500V10M8 11.300V13" strokeWidth="1.700" /></Icon>
                    <AlertBody>
                      <AlertList>
                        <AlertItem>
                          Se uma pasta for selecionada para exclusão, todos os objetos da pasta serão excluídos, e todos os novos objetos<br />
                          adicionados enquanto a ação de exclusão estiver em andamento também poderão ser excluídos. Se um objeto<br />
                          for selecionado para exclusão, todos os novos objetos com o mesmo nome carregados antes da ação de exclusão<br />
                          ser concluídos também serão excluídos.
                        </AlertItem>
                        <AlertItem>A exclusão dos objetos especificados não pode ser desfeita.</AlertItem>
                      </AlertList>
                      <LearnMore>
                        <LearnLink $line $ls={-0.2}>Saiba mais&nbsp;</LearnLink>
                        <Icon $stroke="#0073bb"><path d="M7 2H2v12h12V9M9.500 2H14v4.500M14 2L7 9" /></Icon>
                      </LearnMore>
                    </AlertBody>
                  </Alert>

                  <Card>
                    <CardHead $h={112} $pt={17}>
                      <CardTitle $ls={-0.57}>Objetos especificados</CardTitle>
                      <Field $w={550} $mt={22}><Loupe c="#687078" /><Placeholder>Encontrar objetos por nome</Placeholder></Field>
                    </CardHead>
                    <HeadRow>
                      <HeadCell $on>Nome <SortUp /></HeadCell>
                      <HeadCell>Tipo <SortDown /></HeadCell>
                      <HeadCell>Última modificação <SortDown /></HeadCell>
                      <HeadCell>Tamanho <SortDown /></HeadCell>
                    </HeadRow>
                    <div>
                      {rows.map(([name, type, date, size]) => (
                        <Row key={name}>
                          <Cell>{name.endsWith('/') ? <FolderIcon /> : <FileIcon />}<NameLink>{name}</NameLink></Cell>
                          <Cell>{type}</Cell>
                          <Cell $ls={0.14}>{date}</Cell>
                          <Cell $end $ls={0.05}>{size}</Cell>
                        </Row>
                      ))}
                    </div>
                  </Card>

                  <Card>
                    <CardHead $h={58} $pt={16}><CardTitle $ls={-0.68}>Excluir objetos permanentemente?</CardTitle></CardHead>
                    <CardBody>
                      <Label>Para confirmar a exclusão, digite <em>excluir permanentemente</em> no campo de entrada de texto.</Label>
                      <Field $w={760} $mt={4}>excluir permanentemente</Field>
                    </CardBody>
                  </Card>

                  <Actions>
                    <Button $w={122}>Cancelar</Button>
                    <Button $w={142} $primary>Excluir objetos</Button>
                  </Actions>
                </Column>
              </Content>
              <RightRail>
                <RailSlot $line><Icon $stroke="#545b64"><circle cx="8" cy="8" r="7" /><path d="M6 7.500h2V12M5.800 11.500h4.500M8 3.800v2" strokeWidth="1.800" /></Icon></RailSlot>
                <RailSlot><Icon $stroke="#545b64"><path d="M8 1.200l6 3.400v6.800l-6 3.400-6-3.400V4.600z" /><circle cx="8" cy="8" r="2" fill="#545b64" stroke="none" /><path d="M8 8l4.500 2.500" /></Icon></RailSlot>
              </RightRail>
            </Work>

            <AwsFooter>
              <Shell />
              <FootText $ml="5px" $ls={-0.28}>CloudShell</FootText>
              <FootText $ml="25px">Comentários</FootText>
              <FootText $ml="auto" $ls={-0.32}>© 2024, Amazon Web Services, Inc. ou suas afiliadas.</FootText>
              <FootText $ml="31px">Privacidade</FootText>
              <FootText $ml="26px">Termos</FootText>
              <FootText $ml="25px">Preferências de cookies</FootText>
            </AwsFooter>
          </Page>
          <Scrollbar>
            <Icon $w={11} $h={9} viewBox="0 0 11 9"><path d="M5.500 0L11 9H0z" fill="#8b8b8b" /></Icon>
            <Thumb />
            <Icon $w={11} $h={9} viewBox="0 0 11 9"><path d="M0 0h11L5.500 9z" fill="#8b8b8b" /></Icon>
          </Scrollbar>
        </PageFrame>

        <EdgeSidebar>
          {sideIcons.map((i, n) => <SideSlot key={n}>{i}</SideSlot>)}
          <SideLine $mt="15px" />
          <SideSlot $h={77}><Icon $w={15} viewBox="0 0 15 15" $stroke="#bdbdbd" $sw={1.2}><path d="M7.500 0v15M0 7.500h15" /></Icon></SideSlot>
          <SideLine $mt="auto" />
          <SideSlot $h={56}><Icon $w={18} $h={16} viewBox="0 0 18 16" $stroke="#e6e6e6" $sw={1.4}><rect x=".7" y=".7" width="16.600" height="14" rx="2.500" /><path d="M12.300 1v14" /></Icon></SideSlot>
          <SideSlot $h={45}><Gear s={22} c="#e6e6e6" sw={1.5} /></SideSlot>
        </EdgeSidebar>
      </BrowserBody>

      <Taskbar>
        {taskIcons.map((t, n) => (
          <TaskItem key={n}>
            {t.sel && <Active />}
            {t.i}
            {(t.on || t.sel) && <Indicator $wide={t.sel} />}
          </TaskItem>
        ))}
        <Tray>
          <TrayIcon $w={50}><Icon $w={14} $h={8} viewBox="0 0 14 8" $stroke="#fff" $sw={1.8}><path d="M.7 7.300L7 1l6.300 6.300" /></Icon></TrayIcon>
          <TrayIcon><Icon $w={20} $h={16} viewBox="0 0 20 16" $stroke="#fff" $sw={1.5}><path d="M.7 6.500a13 13 0 0118.600 0M3.500 9.300a9.200 9.200 0 0113 0M6.300 12a5.200 5.200 0 017.400 0" /><circle cx="10" cy="14" r="1.800" fill="#fff" stroke="none" /></Icon></TrayIcon>
          <TrayIcon><Icon $w={20} $h={16} viewBox="0 0 20 16" $stroke="#fff" $sw={1.4} $join="round"><path d="M.8 5.300h3L8.500 1v14l-4.700-4.300h-3zM11 5.300c1.200 1.500 1.200 3.900 0 5.400M13.500 3c2.600 2.700 2.600 7.300 0 10M16 .8c4 4 4 10.400 0 14.400" /></Icon></TrayIcon>
          <TrayIcon><Icon $w={20} $h={17} viewBox="0 0 20 17" $stroke="#fff" $sw={1.5}><path d="M7 4h8.500c1.200 0 1.700.6 1.700 1.700v6.600c0 1.100-.5 1.700-1.700 1.700h-12C2.300 14 1.700 13.400 1.700 12.300V9" /><path d="M6 6.500h8v5.500H4.200V9z" fill="#fff" stroke="none" /><path d="M18.500 7v4" strokeWidth="2" /><path d="M3.500 0L.5 5h2.300L2 8.500 6 3.500H3.800L5 0z" fill="#fff" stroke="none" /></Icon></TrayIcon>
          <Clock>17:53<br />24/01/2024</Clock>
          <TrayIcon $w={38}><Icon $w={16} $h={19} viewBox="0 0 16 19"><path d="M8 0a6 6 0 00-6 6v5L0 14.500V16h16v-1.500L14 11V6a6 6 0 00-6-6zM5.300 17h5.400c-.5 1.200-1.500 2-2.700 2s-2.200-.8-2.700-2z" fill="#efbdf0" /></Icon></TrayIcon>
          <TrayIcon $w={16} />
        </Tray>
      </Taskbar>
    </Screen>
  );
}
